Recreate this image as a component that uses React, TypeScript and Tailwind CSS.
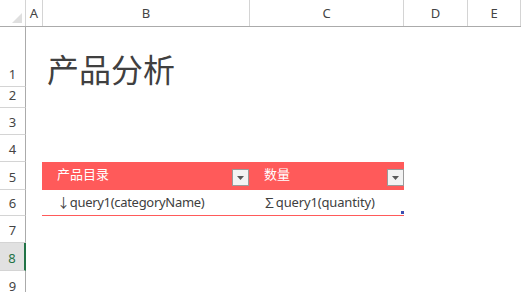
import type { ReactNode } from "react";

const font = { fontFamily: '"Noto Sans", "Noto Sans CJK SC", sans-serif' };

const columns = [
  { label: "A", width: "w-[17px]" },
  { label: "B", width: "w-[207px]" },
  { label: "C", width: "w-[154px]" },
  { label: "D", width: "w-[64px]" },
  { label: "E", width: "flex-1" },
];

function FilterButton() {
  return (
    <span className="flex h-[17px] w-[17px] items-center justify-center border border-[#9a9a9a] bg-[#f3f3f3]">
      <svg width="7" height="4" viewBox="0 0 7 4">
        <path d="M0 0h7L3.5 4z" fill="#595959" />
      </svg>
    </span>
  );
}

interface RowProps {
  num: number;
  height: string;
  selected?: boolean;
  children?: ReactNode;
}

function Row({ num, height, selected = false, children }: RowProps) {
  return (
    <div className={`flex ${height}`}>
      <div
        className={
          selected
            ? "flex w-[26px] shrink-0 items-end justify-center border-r-2 border-b border-r-[#217346] border-b-[#d4d4d4] bg-[#e1e1e1] pb-[2px] text-[13px] text-[#217346]"
            : "flex w-[26px] shrink-0 items-end justify-center border-r border-b border-r-[#ababab] border-b-[#d4d4d4] pb-[2px] text-[13px] text-[#444]"
        }
      >
        {num}
      </div>
      <div className="flex min-w-0 flex-1">{children}</div>
    </div>
  );
}

export default function App() {
  return (
    <div className="h-[292px] w-[521px] overflow-hidden bg-white" style={font}>
      <div className="flex h-[27px] border-b border-[#ababab]">
        <div className="relative w-[26px] shrink-0 border-r border-[#d4d4d4]">
          <svg className="absolute right-[3px] bottom-[3px]" width="10" height="10" viewBox="0 0 10 10">
            <path d="M10 0V10H0z" fill="#dfdfdf" />
          </svg>
        </div>
        {columns.map((col) => (
          <div
            key={col.label}
            className={`${col.width} flex shrink-0 items-end justify-center border-r border-[#d4d4d4] pb-[3px] text-[13px] text-[#444]`}
          >
            {col.label}
          </div>
        ))}
      </div>

      <Row num={1} height="h-[60px]">
        <div className="flex items-end pb-[1px] pl-[21px] text-[32px] leading-none text-[#404040]">
          产品分析
        </div>
      </Row>
      <Row num={2} height="h-[21px]" />
      <Row num={3} height="h-[27px]" />
      <Row num={4} height="h-[27px]" />
      <Row num={5} height="h-[28px]">
        <div className="ml-[16px] flex w-[362px] bg-[#ff5a5a] text-[13px] text-white">
          <div className="flex w-[208px] items-center justify-between pr-[1px] pl-[15px]">
            <span className="-mt-[2px]">产品目录</span>
            <span className="mt-[3px]">
              <FilterButton />
            </span>
          </div>
          <div className="flex flex-1 items-center justify-between pl-[14px]">
            <span className="-mt-[2px]">数量</span>
            <span className="mt-[3px]">
              <FilterButton />
            </span>
          </div>
        </div>
      </Row>
      <Row num={6} height="h-[26px]">
        <div className="relative ml-[16px] flex w-[362px] border-b border-[#ff5a5a] text-[13px] text-[#404040]">
          <div className="flex w-[208px] items-center pl-[15px] tracking-[-0.3px]">
            ↓query1(categoryName)
          </div>
          <div className="flex flex-1 items-center pl-[13px] tracking-[-0.15px]">
            ∑query1(quantity)
          </div>
          <span className="absolute right-0 bottom-[1px] h-[3px] w-[3px] bg-[#3c4fb0]" />
        </div>
      </Row>
      <Row num={7} height="h-[27px]" />
      <Row num={8} height="h-[28px]" selected />
      <Row num={9} height="h-[28px]" />
    </div>
  );
}
